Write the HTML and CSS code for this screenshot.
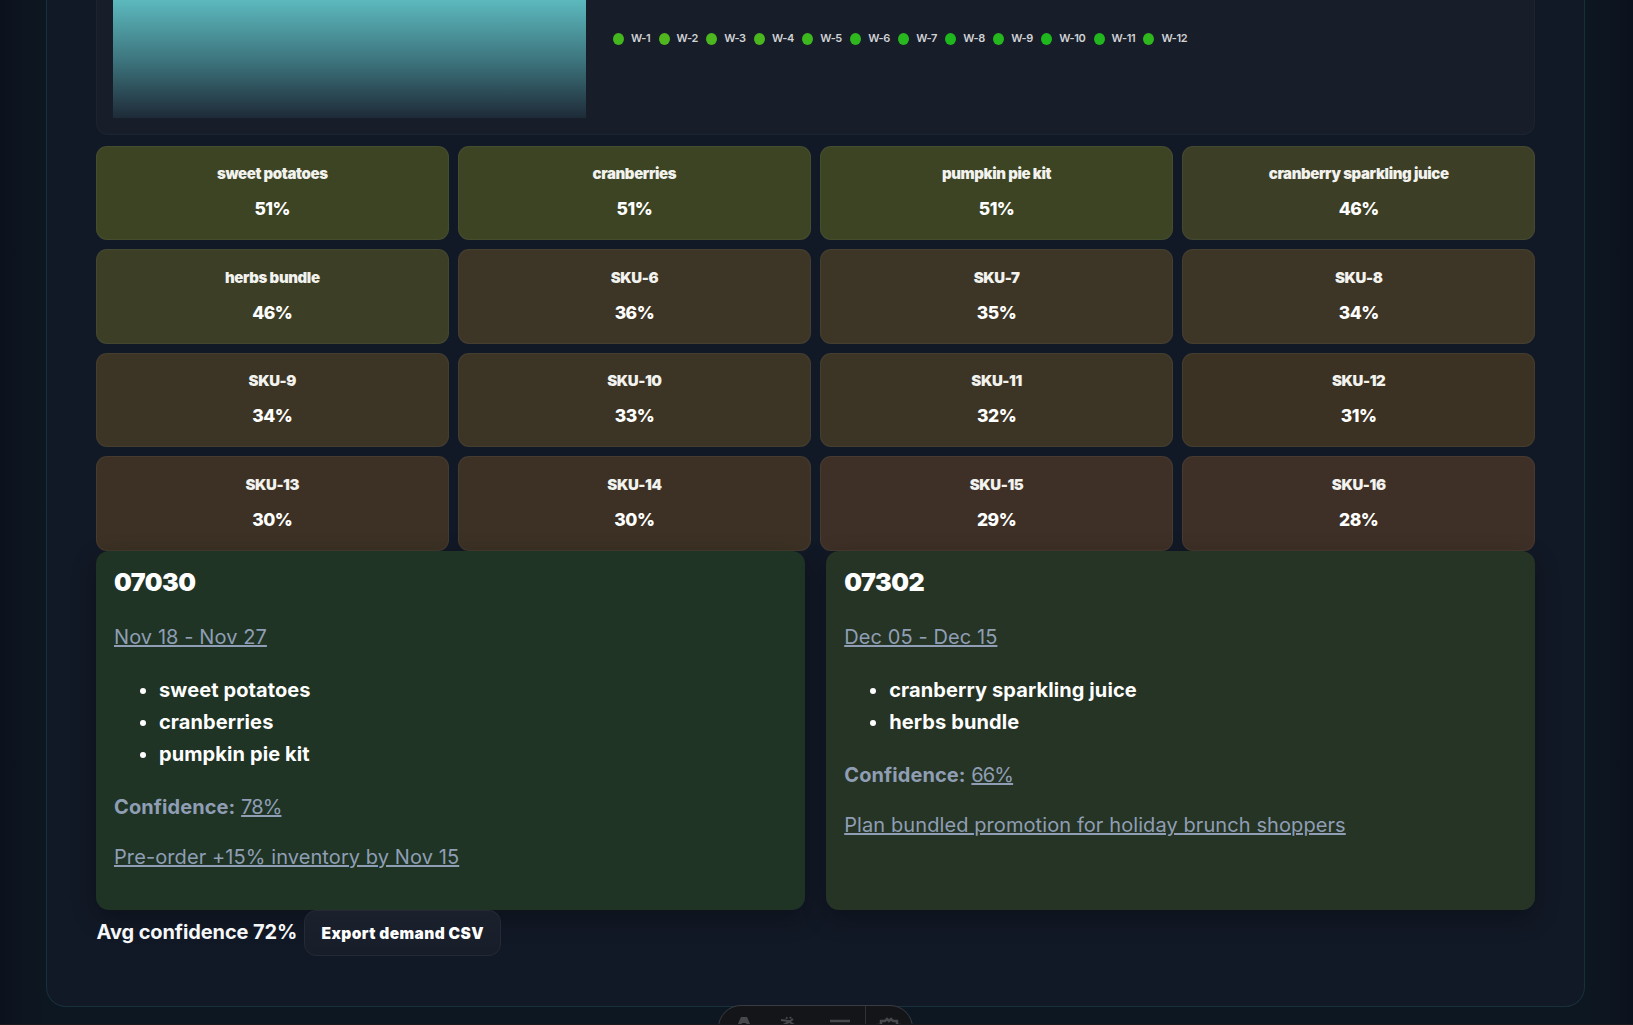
FILE: index.html
```html
<!DOCTYPE html>
<html lang="en">
<head>
<meta charset="utf-8">
<title>Demand forecast</title>
<link rel="stylesheet" href="styles.css">
</head>
<body>
<main class="panel">
  <section class="chart">
    <div class="area"></div>
    <ul class="legend">
      <li><i style="background:#44b71e"></i>W-1</li>
      <li><i style="background:#50b71e"></i>W-2</li>
      <li><i style="background:#4cb71e"></i>W-3</li>
      <li><i style="background:#4ab71e"></i>W-4</li>
      <li><i style="background:#3cb71e"></i>W-5</li>
      <li><i style="background:#2fb71e"></i>W-6</li>
      <li><i style="background:#28b71e"></i>W-7</li>
      <li><i style="background:#1eb71e"></i>W-8</li>
      <li><i style="background:#24b71e"></i>W-9</li>
      <li><i style="background:#1eb71e"></i>W-10</li>
      <li><i style="background:#22b71e"></i>W-11</li>
      <li><i style="background:#2fb71e"></i>W-12</li>
    </ul>
  </section>
  <section class="tiles">
    <div class="tile t51"><span>sweet potatoes</span><b>51%</b></div>
    <div class="tile t51"><span>cranberries</span><b>51%</b></div>
    <div class="tile t51"><span>pumpkin pie kit</span><b>51%</b></div>
    <div class="tile t46"><span>cranberry sparkling juice</span><b>46%</b></div>
    <div class="tile t46"><span>herbs bundle</span><b>46%</b></div>
    <div class="tile t35"><span>SKU-6</span><b>36%</b></div>
    <div class="tile t35"><span>SKU-7</span><b>35%</b></div>
    <div class="tile t35"><span>SKU-8</span><b>34%</b></div>
    <div class="tile t33"><span>SKU-9</span><b>34%</b></div>
    <div class="tile t33"><span>SKU-10</span><b>33%</b></div>
    <div class="tile t33"><span>SKU-11</span><b>32%</b></div>
    <div class="tile t31"><span>SKU-12</span><b>31%</b></div>
    <div class="tile t30"><span>SKU-13</span><b>30%</b></div>
    <div class="tile t30"><span>SKU-14</span><b>30%</b></div>
    <div class="tile t28"><span>SKU-15</span><b>29%</b></div>
    <div class="tile t28"><span>SKU-16</span><b>28%</b></div>
  </section>
  <section class="regions">
    <article class="region high">
      <h3>07030</h3>
      <p><u>Nov 18 - Nov 27</u></p>
      <ul><li>sweet potatoes</li><li>cranberries</li><li>pumpkin pie kit</li></ul>
      <p><strong>Confidence:</strong> <u class="pct">78%</u></p>
      <p><u>Pre-order +15% inventory by Nov 15</u></p>
    </article>
    <article class="region mid">
      <h3>07302</h3>
      <p><u>Dec 05 - Dec 15</u></p>
      <ul><li>cranberry sparkling juice</li><li>herbs bundle</li></ul>
      <p><strong>Confidence:</strong> <u class="pct">66%</u></p>
      <p><u>Plan bundled promotion for holiday brunch shoppers</u></p>
    </article>
  </section>
  <footer class="summary">
    <span>Avg confidence 72%</span>
    <button>Export demand CSV</button>
  </footer>
</main>
<div class="toolbar">
  <svg width="194" height="20" viewBox="0 0 194 20" fill="none" stroke="#46484c" stroke-width="2">
    <path d="M18 20 22 11h6l4 9h-4l-1-3h-4l-1 3z" fill="#46484c" stroke="none"/>
    <path d="M62 14l7 1 8 5M64 19l6-3 4-3M67 11.500l1.500 1M71 11l1 1.500"/>
    <path d="M111 15h20" stroke-width="2.500"/>
    <path d="M146.500 0v20" stroke="#303136" stroke-width="1"/>
    <path d="M158 19h4v-4h4l2-2 2 2 2-2 2 2h4v4h4" stroke-width="2.500"/>
  </svg>
</div>
</body>
</html>
```
FILE: styles.css
```css
* { box-sizing: border-box; }
body {
  margin: 0;
  height: 1025px;
  overflow: hidden;
  position: relative;
  background: linear-gradient(90deg, #0c121d, #0d1721 46px, #0d1721 1585px, #0c121d);
  border-bottom: 1px solid #1b191d;
  color: #fff;
  font: 20px/32px Inter, sans-serif;
}
.panel {
  width: 1539px;
  height: 1007px;
  margin-left: 46px;
  padding: 0 49px;
  border: 1px solid #18303c;
  border-top: 0;
  border-radius: 0 0 20px 20px;
  background: #121926;
}
.chart {
  height: 135px;
  padding: 0 16px 16px;
  border: 1px solid #1d2431;
  border-top: 0;
  border-radius: 0 0 12px 12px;
  background: #181e29;
  display: flex;
  gap: 27.5px;
}
.area { width: 472.5px; background: linear-gradient(#5cb9be, #3c727b 53%, #1e2b38); }
.legend {
  display: flex;
  gap: 8.3px;
  list-style: none;
  margin: 29px 0 0;
  padding: 0;
  height: 20px;
  font-size: 11px;
  line-height: 18px;
  font-weight: 600;
  letter-spacing: -.4px;
  color: #d0d2d5;
}
.legend li { display: flex; gap: 7px; }
.legend i { width: 11px; height: 12px; border-radius: 50%; margin-top: 4px; }
.tiles {
  display: grid;
  grid-template-columns: repeat(4, 1fr);
  grid-auto-rows: 94.4px;
  gap: 9.1px 9.6px;
  margin-top: 10.8px;
}
.tile {
  border: 1px solid rgba(255, 255, 255, .05);
  border-radius: 11px;
  text-align: center;
  display: flex;
  flex-direction: column;
  padding-top: 10.4px;
}
.tile span { font-size: 15px; font-weight: 900; letter-spacing: -.4px; color: #f2f2ee; line-height: 34px; }
.tile b { font-size: 17.5px; font-weight: 800; letter-spacing: -.5px; line-height: 35px; }
.t51 { background: #3c4424; }
.t46 { background: #3c3f25; }
.t35 { background: #3d3525; }
.t33 { background: #3c3424; }
.t31 { background: #3c3223; }
.t30 { background: #3c3124; }
.t28 { background: #3e3026; }
.regions { display: grid; grid-template-columns: 1fr 1fr; gap: 21.5px; margin-top: .3px; }
.region {
  height: 359px;
  padding: 15px 18px;
  border-radius: 13px;
  box-shadow: 0 8px 24px rgba(0, 0, 0, .3);
}
.high { background: #1f3425; }
.mid { background: #263425; }
.region h3 { margin: 0 0 23px; font-size: 25px; font-weight: 900; letter-spacing: -.5px; line-height: 32px; }
.region p { margin: 0 0 18px; color: #8f9eb4; letter-spacing: .09px; }
.region .pct { letter-spacing: -.9px; }
.region ul { margin: 0 0 21px; padding-left: 45px; font-weight: 700; letter-spacing: .1px; }
.region h3 + p { margin-bottom: 21px; }
.summary { display: flex; gap: 7px; padding-left: .5px; font-weight: 700; letter-spacing: -.1px; line-height: 44px; color: #f6f7f9; }
.summary button {
  width: 197px;
  height: 46px;
  border: 1px solid #252a36;
  border-radius: 12px;
  background: linear-gradient(#1b212c, #181e29);
  color: #fff;
  font: 900 15.5px Inter, sans-serif;
  letter-spacing: .4px;
  white-space: nowrap;
  padding: 2px 0 0;
}
.toolbar {
  position: absolute;
  left: 718px;
  top: 1005px;
  width: 195px;
  height: 46px;
  border: 1px solid #3a3c42;
  border-radius: 23px;
  background: #141519;
}
.toolbar svg { display: block; }
```
